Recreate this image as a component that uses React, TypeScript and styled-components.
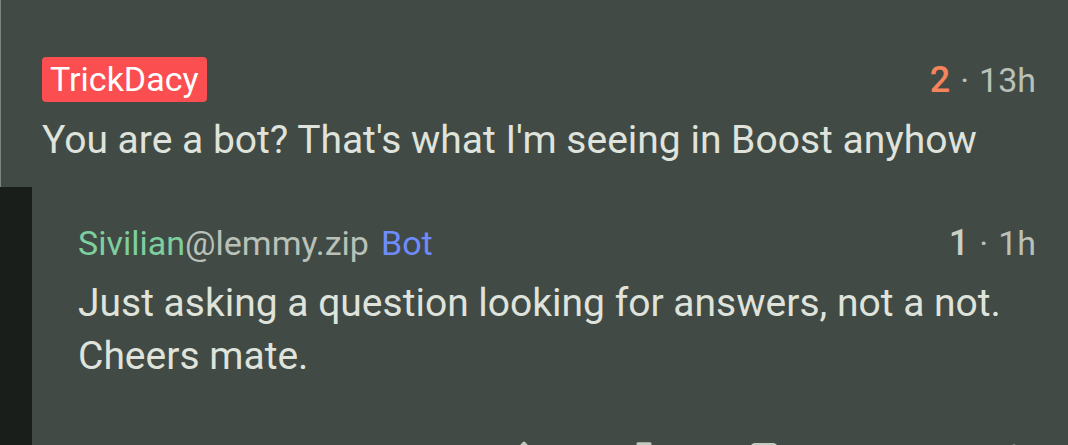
import React from "react";
import styled, { createGlobalStyle } from "styled-components";

const Global = createGlobalStyle`
  html, body { margin: 0; padding: 0; background: #414a45; }
  body { font-family: Roboto, "Noto Sans", sans-serif; overflow: hidden; }
`;

const Page = styled.div`
  width: 1068px;
  height: 445px;
  background: #414a45;
  overflow: hidden;
  display: flex;
  flex-direction: column;
`;

const Comment = styled.div`
  border-left: 1px solid #7d847f;
  padding: 57px 32px 0 41px;
  height: 130px;
  flex-shrink: 0;
`;

const Header = styled.div`
  display: flex;
  justify-content: space-between;
  align-items: center;
  height: 45px;
`;

const OpBadge = styled.span`
  background: #fb4e50;
  color: #ffffff;
  border-radius: 4px;
  font-size: 34px;
  line-height: 45px;
  padding: 0 8px 0 8px;
`;

const Meta = styled.div`
  font-size: 34px;
  color: #b9c1b8;
  display: flex;
  align-items: center;
  gap: 10px;
`;

const Score = styled.span<{ $tone: "hot" | "plain" }>`
  font-size: 36px;
  font-weight: 500;
  color: ${(p) => (p.$tone === "hot" ? "#f5845d" : "#c9d0c6")};
`;

const Body = styled.p`
  margin: 12px 0 0;
  color: #dfe3db;
  font-size: 39px;
  line-height: 53px;
`;

const ReplyRow = styled.div`
  display: flex;
  flex: 1;
`;

const Thread = styled.div`
  width: 32px;
  background: #1a1e1b;
  flex-shrink: 0;
`;

const ReplyContent = styled.div`
  flex: 1;
  padding: 33px 32px 0 46px;
  display: flex;
  flex-direction: column;
`;

const Author = styled.span`
  font-size: 34px;
  color: #b9c1b8;
`;

const Name = styled.span`
  color: #7dcf9e;
`;

const BotTag = styled.span`
  color: #6f8cff;
  margin-left: 12px;
`;

const Actions = styled.div`
  display: flex;
  justify-content: flex-end;
  align-items: flex-start;
  gap: 84px;
  margin-top: 54px;
  padding-right: 4px;
  color: #c3cbc1;
`;

const ActionIcon = styled.svg<{ $extra?: number }>`
  width: 36px;
  height: 36px;
  flex-shrink: 0;
  margin-left: ${(p) => p.$extra ?? 0}px;
  fill: none;
  stroke: currentColor;
  stroke-width: 2;
  stroke-linecap: round;
  stroke-linejoin: round;
`;

export default function App() {
  return (
    <Page>
      <Global />
      <Comment>
        <Header>
          <OpBadge>TrickDacy</OpBadge>
          <Meta>
            <Score $tone="hot">2</Score>
            <span>·</span>
            <span>13h</span>
          </Meta>
        </Header>
        <Body>You are a bot? That's what I'm seeing in Boost anyhow</Body>
      </Comment>
      <ReplyRow>
        <Thread />
        <ReplyContent>
          <Header>
            <Author>
              <Name>Sivilian</Name>@lemmy.zip<BotTag>Bot</BotTag>
            </Author>
            <Meta>
              <Score $tone="plain">1</Score>
              <span>·</span>
              <span>1h</span>
            </Meta>
          </Header>
          <Body>
            Just asking a question looking for answers, not a not.
            <br />
            Cheers mate.
          </Body>
          <Actions>
            <ActionIcon viewBox="0 0 24 24">
              <path d="M12 4 L4 13 H8 V20 H16 V13 H20 Z" />
            </ActionIcon>
            <ActionIcon viewBox="0 0 24 24">
              <path d="M8 4.5 H16 V11 H20 L12 20 L4 11 H8 Z" />
            </ActionIcon>
            <ActionIcon viewBox="0 0 24 24">
              <path d="M4 7 a2 2 0 0 1 2-2 h12 a2 2 0 0 1 2 2 v14 l-8-4 -8 4 Z" />
            </ActionIcon>
            <ActionIcon viewBox="0 0 24 24">
              <polyline points="9 17 4 12 9 7" />
              <path d="M20 18v-2a4 4 0 0 0-4-4H4" />
            </ActionIcon>
            <ActionIcon viewBox="0 0 24 24" $extra={10}>
              <circle cx="12" cy="7" r="1" />
              <circle cx="12" cy="12" r="1" />
              <circle cx="12" cy="17" r="1" />
            </ActionIcon>
          </Actions>
        </ReplyContent>
      </ReplyRow>
    </Page>
  );
}
